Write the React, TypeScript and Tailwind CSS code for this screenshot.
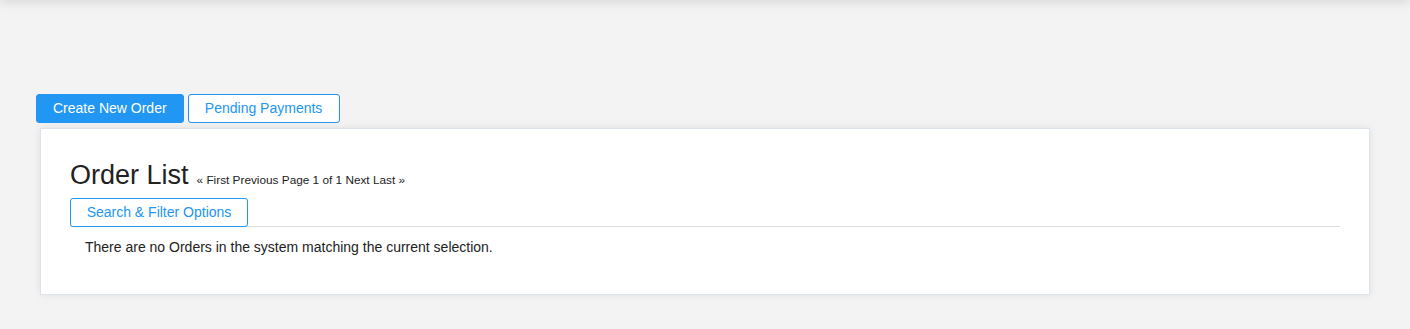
export default function App() {
  return (
    <div className="min-h-[329px] bg-[#f3f3f3] relative" style={{ fontFamily: '"Liberation Sans", Arial, sans-serif' }}>
      {/* header shadow from above the fold */}
      <div className="absolute left-0 right-0 -top-[20px] h-[20px] bg-white shadow-[0_2px_12px_rgba(0,0,0,0.12)]" />
      <div className="pt-[94px] pl-[36px] pr-[40px]">
        <div className="flex gap-[4px]">
          <button className="h-[29px] px-[16px] rounded-[3px] bg-[#2196f3] border border-[#2196f3] text-white text-[14px]">Create New Order</button>
          <button className="h-[29px] w-[152px] rounded-[3px] bg-white border border-[#2196f3] text-[#2196f3] text-[14px]">Pending Payments</button>
        </div>
        <div className="ml-[4px] mt-[5px] bg-white border border-[#dde3ea] shadow-[0_0_8px_rgba(0,0,0,0.08)] pt-[30px] pb-[36px] pl-[29px] pr-[29px]">
          <div className="flex items-baseline gap-[8px]">
            <h1 className="text-[27px] leading-[32px] text-[#222]">Order List</h1>
            <div className="text-[11.8px] text-[#222]">« First Previous Page 1 of 1 Next Last »</div>
          </div>
          <div className="mt-[7px] border-b border-[#dddddd]">
            <button className="h-[29px] -mb-px w-[178px] rounded-[3px] bg-white border border-[#2196f3] text-[#2196f3] text-[14px]">Search &amp; Filter Options</button>
          </div>
          <p className="mt-[10px] pl-[15px] text-[14px] text-[#222]">There are no Orders in the system matching the current selection.</p>
        </div>
      </div>
    </div>
  )
}
